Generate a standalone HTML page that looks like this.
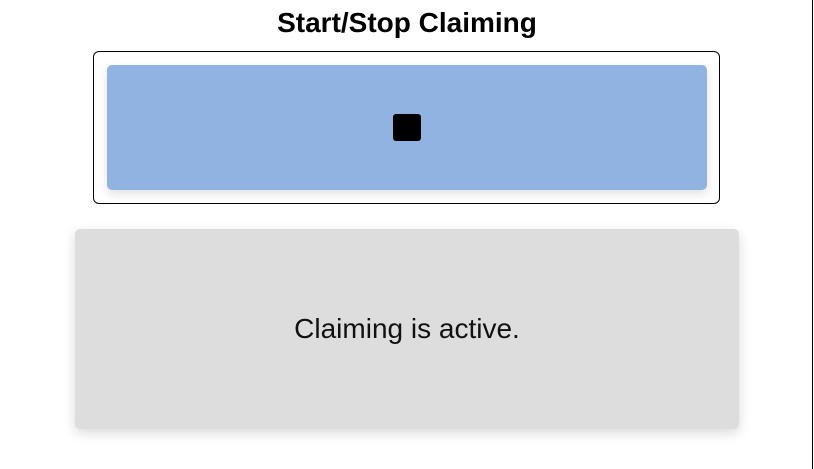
<!DOCTYPE html>
<html><head><style>
html,body{margin:0;padding:0;background:#fff;width:814px;height:469px;overflow:hidden;position:relative;font-family:"Liberation Sans",sans-serif}
h1{position:absolute;left:0;width:814px;top:6px;margin:0;text-align:center;font-size:28px;font-weight:bold;color:#000;line-height:34px}
.box{position:absolute;left:93px;top:51px;border:1px solid #000;border-radius:6px;width:625px;height:151px}
.btn{position:absolute;left:107px;top:65px;width:600px;height:125px;background:#91b3e1;border-radius:5px;box-shadow:0 4px 10px rgba(0,0,0,0.12)}
.sq{position:absolute;left:393px;top:114px;width:28px;height:27px;background:#000;border-radius:3px}
.panel{position:absolute;left:75px;top:229px;width:664px;height:200px;background:#dddddd;border-radius:5px;box-shadow:0 4px 12px rgba(0,0,0,0.15)}
.txt{position:absolute;left:75px;width:664px;top:312px;text-align:center;font-size:28px;color:#111;line-height:34px}
.vl{position:absolute;left:812px;top:0;width:1px;height:469px;background:#000}
</style></head><body>
<h1>Start/Stop Claiming</h1>
<div class="box"></div>
<div class="btn"></div>
<div class="sq"></div>
<div class="panel"></div>
<div class="txt">Claiming is active.</div>
<div class="vl"></div>
</body></html>
